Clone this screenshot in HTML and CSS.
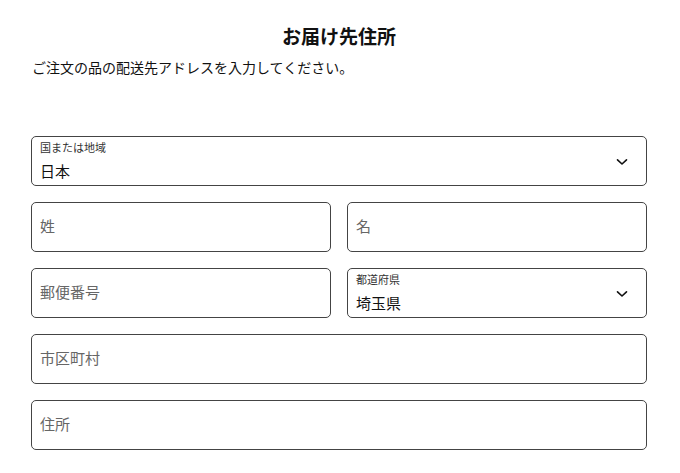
FILE: index.html
```html
<!DOCTYPE html>
<html lang="ja">
<head>
<meta charset="utf-8">
<link rel="stylesheet" href="styles.css">
</head>
<body>
<main class="page">
  <h1 class="title">お届け先住所</h1>
  <p class="lead">ご注文の品の配送先アドレスを入力してください。</p>
  <form class="form">
    <div class="field select">
      <div class="select-text">
        <span class="label">国または地域</span>
        <span class="value">日本</span>
      </div>
      <svg class="chev" width="12" height="8" viewBox="0 0 12 8"><path d="M1.5 1.8 L6 6 L10.5 1.8" fill="none" stroke="#111" stroke-width="1.6" stroke-linecap="round" stroke-linejoin="round"/></svg>
    </div>
    <div class="row">
      <div class="field"><span class="placeholder">姓</span></div>
      <div class="field"><span class="placeholder">名</span></div>
    </div>
    <div class="row">
      <div class="field"><span class="placeholder">郵便番号</span></div>
      <div class="field select">
        <div class="select-text">
          <span class="label">都道府県</span>
          <span class="value">埼玉県</span>
        </div>
        <svg class="chev" width="12" height="8" viewBox="0 0 12 8"><path d="M1.5 1.8 L6 6 L10.5 1.8" fill="none" stroke="#111" stroke-width="1.6" stroke-linecap="round" stroke-linejoin="round"/></svg>
      </div>
    </div>
    <div class="field"><span class="placeholder">市区町村</span></div>
    <div class="field"><span class="placeholder">住所</span></div>
  </form>
</main>
</body>
</html>
```
FILE: styles.css
```css
* { box-sizing: border-box; }
html, body { margin: 0; padding: 0; background: #fff; }
body {
  font-family: "Noto Sans CJK JP", "Noto Sans", sans-serif;
  color: #111;
}
.page {
  width: 616px;
  margin-left: 31px;
  padding-top: 22px;
}
.title {
  margin: 0;
  font-size: 19px;
  font-weight: 700;
  line-height: 28px;
  text-align: center;
}
.lead {
  margin: 7px 0 0 1px;
  font-size: 14px;
  line-height: 20px;
}
.form {
  margin-top: 59px;
  display: flex;
  flex-direction: column;
  gap: 16px;
}
.row {
  display: grid;
  grid-template-columns: 1fr 1fr;
  gap: 16px;
}
.field {
  height: 50px;
  border: 1px solid #444;
  border-radius: 5px;
  display: flex;
  align-items: center;
  padding: 0 8px 3px;
}
.placeholder {
  font-size: 15px;
  color: #666;
}
.select {
  justify-content: space-between;
  padding: 0 18px 0 8px;
}
.select-text {
  align-self: flex-start;
  display: flex;
  flex-direction: column;
  padding-top: 3px;
}
.label {
  font-size: 11px;
  line-height: 14px;
  color: #333;
}
.value {
  font-size: 15px;
  line-height: 22px;
  color: #111;
  margin-top: 6px;
}
.chev { display: block; margin-top: 2px; }
```
